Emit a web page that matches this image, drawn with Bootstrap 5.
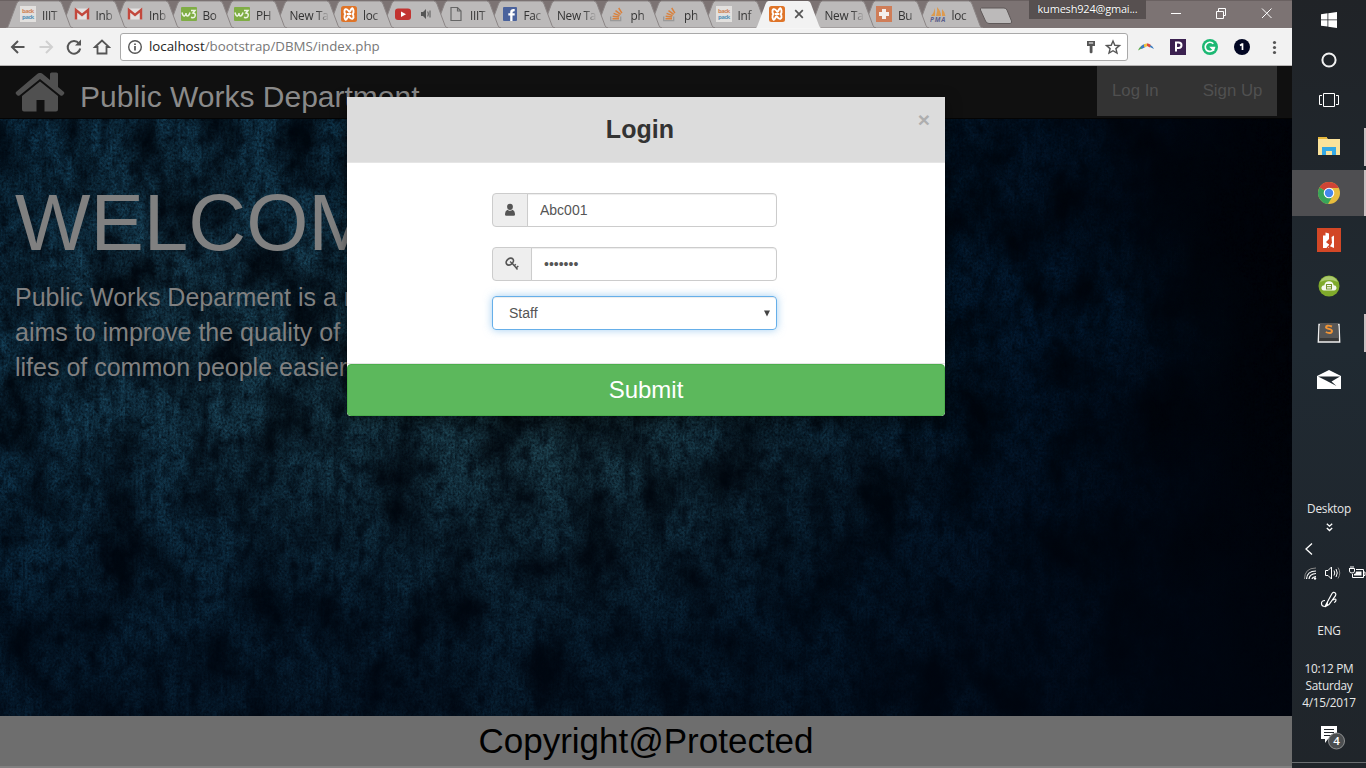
<!DOCTYPE html>
<html lang="en">
<head>
<meta charset="utf-8">
<meta name="viewport" content="width=device-width, initial-scale=1">
<title>Public Works Department</title>
<link href="https://cdn.jsdelivr.net/npm/bootstrap@5.3.0/dist/css/bootstrap.min.css" rel="stylesheet">
<script src="https://cdn.jsdelivr.net/npm/bootstrap@5.3.0/dist/js/bootstrap.bundle.min.js"></script>
<style>
  body { width: 1366px; height: 768px; font-family: "Liberation Sans", Arial, sans-serif; background: #000; }
  svg { display: block; flex: none; }
  .chrome-win { width: 1292px; }
  .ui { font-family: "Open Sans", "Noto Sans", sans-serif; }

  /* tab strip */
  .strip { height: 28px; background: #7c7373; box-shadow: inset 0 1px #6a6161; padding-left: 7px; }
  .tab { width: 66px; height: 28px; margin-right: -12.5px; flex: none; font-size: 11.8px; line-height: 28px; color: #333; letter-spacing: -.3px; padding-left: 13px; position: relative; isolation: isolate; }
  .tab > .shape { position: absolute; left: -1px; top: 0; z-index: -1; }
  .tab .label { width: 20px; margin-left: 6px; white-space: nowrap; padding-top: 1px; -webkit-mask-image: linear-gradient(90deg,#000 50%,rgba(0,0,0,.25) 90%); mask-image: linear-gradient(90deg,#000 50%,rgba(0,0,0,.25) 90%); }
  .tab .label.wide { width: 41px; margin-left: 2px; -webkit-mask-image: linear-gradient(90deg,#000 65%,rgba(0,0,0,.15) 92%); mask-image: linear-gradient(90deg,#000 65%,rgba(0,0,0,.15) 92%); }
  .user-chip { width: 117px; height: 19px; background: #575050; color: #fff; font-size: 11px; line-height: 18px; letter-spacing: -.2px; margin-left: 17px; text-shadow: 0 0 1px #222; }

  /* toolbar */
  .tools { height: 38px; background: #f2f2f2; border-top: 1px solid #f6f6f6; border-bottom: 1px solid #b5b3b3; }
  .address { width: 1008px; height: 28px; background: #fff; border: 1px solid #a9a9a9; border-radius: 3px; font-size: 13.3px; color: #777; margin-left: 9px; padding: 0 3px 0 6px; }
  .address .host { color: #222; }
  .address .path { padding-left: 6px; }

  /* page */
  .site { height: 702px; }
  .topbar { height: 53px; background: #101010; border-bottom: 1px solid #040404; padding: 0 15px; }
  .brand { font-size: 30px; line-height: 30px; color: #8a8a8a; margin: 16px 0 0 15px; }
  .auth { width: 180px; height: 50px; background: #333; font-size: 16.8px; color: #555; gap: 13px; line-height: 49px; padding: 0 15px; }
  .auth a { color: #505050; text-decoration: none; white-space: nowrap; }
  .auth a + a { margin-left: 31px; }
  .hero { height: 597px; position: relative; overflow: hidden; color: #808080; padding: 49px 15px 0;
    background:
      radial-gradient(ellipse 190px 190px at 1292px 150px, rgba(0,1,4,.95), transparent),
      radial-gradient(ellipse 180px 100px at 1110px 190px, rgba(5,48,85,.4), transparent),
      radial-gradient(ellipse 420px 240px at 560px 290px, rgba(44,84,92,.75), transparent),
      radial-gradient(ellipse 330px 330px at 170px 200px, rgba(36,80,98,.7), transparent),
      radial-gradient(ellipse 260px 150px at 330px 600px, rgba(16,60,90,.35), transparent),
      linear-gradient(90deg, #0d3854 0, #10384f 40%, #07263d 62%, #03162a 80%, #010813 91%, #000206 100%); }
  .hero .grain { position: absolute; inset: 0; }
  .hero h1 { font-size: 80px; line-height: 88px; font-weight: 400; margin: 11px 0 0; position: relative; }
  .hero p { font-size: 25px; line-height: 35px; margin: 13px 0 0; position: relative; }
  .foot { height: 52px; background: #6e6e6e; border-bottom: 2px solid #808080; color: #000; font-size: 35px; line-height: 50px; }

  /* login dialog, lies over the page */
  .dialog { position: absolute; left: 347px; top: 31px; width: 598px; height: 319px; background: #fff; border: 0; border-radius: 0 0 4px 4px; box-shadow: 0 5px 15px rgba(0,0,0,.5); z-index: 5; }
  .dialog .modal-header { height: 66px; background: #dcdcdc; border-bottom: 1px solid #e5e5e5; border-radius: 0; padding: 0 12px 2px 0; position: relative; }
  .dialog h4 { font-size: 25px; font-weight: 700; color: #333; line-height: 62px; letter-spacing: .05px; }
  .dismiss { position: absolute; right: 15px; top: 12px; font-size: 21px; line-height: 21px; font-weight: 700; color: #aeaeae; background: none; border: 0; padding: 0; }
  .dialog .modal-body { padding: 30px 168px 0 145px; flex: none; height: 200px; }
  .dialog .input-group { height: 34px; margin-bottom: 20px; }
  .dialog .input-group-text { background: #eee; border-color: #ccc; padding: 0 11px; border-radius: 4px; color: #555; }
  .dialog .input-group-text.key { padding-left: 12px; }
  .dialog .form-control { font-size: 14px; height: 34px; color: #555; border-color: #ccc; border-radius: 4px; padding: 6px 12px; line-height: 20px; box-shadow: inset 0 1px 1px rgba(0,0,0,.075); }
  .dialog .role { border: 1px solid #66afe9; box-shadow: inset 0 1px 1px rgba(0,0,0,.075), 0 0 8px rgba(102,175,233,.6); margin-top: -5px; padding: 0 6px 0 16px; border-radius: 4px; height: 34px; font-size: 14px; color: #555; }
  .dialog .modal-footer { border-top: 1px solid #e5e5e5; padding: 0; height: 53px; }
  .dialog .submit { height: 52px; width: 100%; margin: 0; background: #5cb85c; border: 1px solid #4cae4c; color: #fff; font-size: 24px; line-height: 32px; border-radius: 4px; padding: 0; }

  /* task bar */
  .taskbar { width: 74px; height: 768px; background: linear-gradient(#202327, #202a32 45%, #1f262d 75%, #20252a); color: #e8e8e8; font-size: 11.8px; letter-spacing: -.25px; }
  .cell { height: 40px; display: flex; align-items: center; justify-content: center; }
  .app { height: 47px; border-right: 2px solid transparent; padding-left: 2px; }
  .app.open { background: linear-gradient(#cbc0c2,#cbc0c2) right / 2px 38px no-repeat; border-right: 0; padding-right: 2px; }
  .app.current { height: 46px; background: linear-gradient(90deg,#4e4e51 72px,#cbc0c2 72px); border-right: 0; padding-right: 2px; }
  .clock { line-height: 17px; height: 51px; text-align: center; white-space: nowrap; }
</style>
</head>
<body class="d-flex overflow-hidden m-0">

<svg width="0" height="0" class="position-absolute">
  <defs>
    <symbol id="tab" viewBox="0 0 67 28"><path d="M0 28C1.500 28 2 27 2.500 25.500L10.500 4Q11.500 1 13.500 1H52.500Q55 1 56 4L64 25.500Q65 28 67 28Z" fill="#bcbaba" stroke="#8b8585"/></symbol>
    <symbol id="tab-on" viewBox="0 0 67 28"><path d="M0 28.500C1.500 28 2 27 2.500 25.500L10.500 4Q11.500 1 13.500 1H52.500Q55 1 56 4L64 25.500Q65 28 67 28.500Z" fill="#f2f2f2"/></symbol>
    <symbol id="gmail" viewBox="0 0 16 16"><path d="M1 2.500h14v11H1z" fill="#e3e1e1"/><path d="M2 13.500V4L8 9l6-5v9.500" fill="none" stroke="#c3483d" stroke-width="2.400"/></symbol>
    <symbol id="xampp" viewBox="0 0 16 16"><rect width="16" height="16" rx="2.500" fill="#df7428"/><path d="M3.500 4.500Q4.500 2.500 6 3.500T8 5.500t2-2 2.500 1Q13 6.500 11.500 8 13 9.500 12.500 11.500 11.500 13.500 10 12.500T8 10.500t-2 2-2.500-1Q3 9.500 4.500 8 3 6.500 3.500 4.500zM6 8h4" fill="none" stroke="#fff" stroke-width="1.900"/></symbol>
    <symbol id="stack" viewBox="0 0 16 16"><path d="M1.700 10.500v4.200h10v-4.200" fill="none" stroke="#999" stroke-width="1.300"/><path d="M3.500 12.700h6.500M3.700 10.200l6.400.9M4.600 7.400l6 2.200M6.500 4.600l5.200 3.800M9.700 2l3.200 5.200" stroke="#d8813d" stroke-width="1.500"/></symbol>
    <symbol id="page-i" viewBox="0 0 16 16"><path d="M3 1.500h6.500L13 5v9.500H3zM9.500 1.500V5H13" fill="none" stroke="#666" stroke-width="1.200"/></symbol>
    <symbol id="w3" viewBox="0 0 16 16"><rect y="1" width="16" height="14" rx="1" fill="#7fad45"/><path d="M1 6.500q1 4 2.500 3.500T5 7q0 3 1.500 3T9 6.500M10 4.500h4L12 7q3 .3 2 3.200-1 2.300-4 1" fill="none" stroke="#edf4e5" stroke-width="1.500"/></symbol>
  </defs>
</svg>

<div class="chrome-win d-flex flex-column flex-shrink-0">
  <!-- tab strip -->
  <div class="strip ui d-flex">
    <div class="tab d-flex align-items-center" style="z-index:18"><svg class="shape" width="67" height="28"><use href="#tab"/></svg><svg width="16" height="16"><rect width="16" height="16" fill="#e2e0de"/><text x="2" y="7" font-size="6" font-weight="700" fill="#cf8358" textLength="12">back</text><text x="2" y="13" font-size="6" font-weight="700" fill="#5692b8" textLength="12">pack</text></svg><span class="label">IIIT</span></div>
    <div class="tab d-flex align-items-center" style="z-index:17"><svg class="shape" width="67" height="28"><use href="#tab"/></svg><svg width="16" height="16"><use href="#gmail"/></svg><span class="label">Inb</span></div>
    <div class="tab d-flex align-items-center" style="z-index:16"><svg class="shape" width="67" height="28"><use href="#tab"/></svg><svg width="16" height="16"><use href="#gmail"/></svg><span class="label">Inb</span></div>
    <div class="tab d-flex align-items-center" style="z-index:15"><svg class="shape" width="67" height="28"><use href="#tab"/></svg><svg width="16" height="16"><use href="#w3"/></svg><span class="label">Bo</span></div>
    <div class="tab d-flex align-items-center" style="z-index:14"><svg class="shape" width="67" height="28"><use href="#tab"/></svg><svg width="16" height="16"><use href="#w3"/></svg><span class="label">PH</span></div>
    <div class="tab d-flex align-items-center" style="z-index:13"><svg class="shape" width="67" height="28"><use href="#tab"/></svg><span class="label wide">New Ta</span></div>
    <div class="tab d-flex align-items-center" style="z-index:12"><svg class="shape" width="67" height="28"><use href="#tab"/></svg><svg width="16" height="16"><use href="#xampp"/></svg><span class="label">loc</span></div>
    <div class="tab d-flex align-items-center" style="z-index:11"><svg class="shape" width="67" height="28"><use href="#tab"/></svg><svg width="16" height="16"><rect y="2.500" width="16" height="11.500" rx="3" fill="#c23431"/><path d="M6 5.500l5 2.800-5 2.800z" fill="#fff"/></svg><svg style="margin-left:10px" width="14" height="12" viewBox="0 0 14 12"><path d="M0 4h2l3-3v10L2 8H0z" fill="#555"/><path d="M6.800 3.500q1 2.500 0 5M9 2.500v7" stroke="#555" fill="none"/></svg></div>
    <div class="tab d-flex align-items-center" style="z-index:10"><svg class="shape" width="67" height="28"><use href="#tab"/></svg><svg width="16" height="16"><use href="#page-i"/></svg><span class="label">IIIT</span></div>
    <div class="tab d-flex align-items-center" style="z-index:9"><svg class="shape" width="67" height="28"><use href="#tab"/></svg><svg width="16" height="16"><rect x="1" y="1" width="14" height="14" rx="1" fill="#4a629c"/><path d="M10.500 15V9.500h2.200V7.300h-2.200q-.2-2.300 2.200-2V3.100Q8.200 2.600 8.200 6v1.300H6.300v2.200h1.900V15z" fill="#fff"/></svg><span class="label">Fac</span></div>
    <div class="tab d-flex align-items-center" style="z-index:8"><svg class="shape" width="67" height="28"><use href="#tab"/></svg><span class="label wide">New Ta</span></div>
    <div class="tab d-flex align-items-center" style="z-index:7"><svg class="shape" width="67" height="28"><use href="#tab"/></svg><svg width="16" height="16"><use href="#stack"/></svg><span class="label">ph</span></div>
    <div class="tab d-flex align-items-center" style="z-index:6"><svg class="shape" width="67" height="28"><use href="#tab"/></svg><svg width="16" height="16"><use href="#stack"/></svg><span class="label">ph</span></div>
    <div class="tab d-flex align-items-center" style="z-index:5"><svg class="shape" width="67" height="28"><use href="#tab"/></svg><svg width="16" height="16"><rect width="16" height="16" fill="#e2e0de"/><text x="2" y="7" font-size="6" font-weight="700" fill="#cf8358" textLength="12">back</text><text x="2" y="13" font-size="6" font-weight="700" fill="#5692b8" textLength="12">pack</text></svg><span class="label">Inf</span></div>
    <div class="tab d-flex align-items-center" style="z-index:20"><svg class="shape" width="67" height="28"><use href="#tab-on"/></svg><svg width="16" height="16"><use href="#xampp"/></svg><svg style="margin-left:9px" width="10" height="10" viewBox="0 0 10 10"><path d="M1.200 1.200l7.600 7.600m0-7.600L1.200 8.800" stroke="#555" stroke-width="1.700"/></svg></div>
    <div class="tab d-flex align-items-center" style="z-index:4"><svg class="shape" width="67" height="28"><use href="#tab"/></svg><span class="label wide">New Ta</span></div>
    <div class="tab d-flex align-items-center" style="z-index:3"><svg class="shape" width="67" height="28"><use href="#tab"/></svg><svg width="16" height="16"><rect width="16" height="16" fill="#cf7d58"/><path d="M8 3v10M3 8h10" stroke="#f4efec" stroke-width="4"/></svg><span class="label">Bu</span></div>
    <div class="tab d-flex align-items-center" style="z-index:2"><svg class="shape" width="67" height="28"><use href="#tab"/></svg><svg width="16" height="16"><path d="M1 10q3-3 4-8v8zM6 10q2-5 1-9 4 4 4 9zM12 10V3q3 3 3.500 7z" fill="#dd9a4d"/><text x="0" y="16" font-size="6.500" font-weight="700" font-style="italic" fill="#5c5f8c" textLength="15">PMA</text></svg><span class="label">loc</span></div>
    <svg style="margin:7px 0 0 8px" width="36" height="18" viewBox="0 0 36 18"><path d="M3.500 1H26q2 0 3 2l4.500 11q.8 2.500-1.500 2.500H11q-2.500 0-3.500-2.500L2.500 3Q2 1 3.500 1z" fill="#bcbaba" stroke="#5f5959"/></svg>
    <div class="user-chip text-center" style="margin-left:15px">kumesh924@gmai...</div>
    <svg style="margin-left:24px" width="112" height="27" viewBox="0 0 112 27" fill="none" stroke="#fff"><path d="M1 13.500h10M46.500 11.500h7v7h-7zM48.500 11.500v-3h7v7h-2M92 8.500l9.500 9.500m0-9.500L92 18"/></svg>
  </div>

  <!-- toolbar -->
  <div class="tools ui d-flex align-items-center">
    <svg width="111" height="28" viewBox="0 0 111 28" fill="none" stroke="#555" stroke-width="2"><path d="M24.500 14H12m6-6l-6 6 6 6"/><path stroke="#d0d0d0" d="M39.500 14H52m-6-6l6 6-6 6"/><path d="M79 10.500a6.300 6.300 0 1 0 1.200 5"/><path d="M75 12.500h6v-6z" fill="#555" stroke="none"/><path d="M95 14l7-6.500 7 6.500h-2.500v6.500h-9V14z" stroke-width="1.800"/></svg>
    <div class="address d-flex align-items-center">
      <svg width="16" height="16" viewBox="0 0 16 16" fill="none" stroke="#555" stroke-width="1.400"><circle cx="8" cy="8" r="6.300"/><path d="M8 7v4.500M8 4.500v1.400" stroke-width="1.700"/></svg>
      <span class="path flex-grow-1"><span class="host">localhost</span>/bootstrap/DBMS/index.php</span>
      <svg width="42" height="18" viewBox="0 0 42 18"><path d="M5 3h8v5h-2.500v6.500l-1.500 1-1.300-1V8H5z" fill="#555"/><path d="M6.800 5h4.400" stroke="#fff"/><path d="M31 3l1.800 4.300 4.700.3-3.600 3 1.100 4.500-4-2.400-4 2.400 1.100-4.500-3.600-3 4.700-.3z" fill="none" stroke="#555" stroke-width="1.400"/></svg>
    </div>
    <svg width="163" height="28" viewBox="0 0 163 28" style="margin-left:1px">
      <path d="M9 17.500q1-3 4-5l1.500 2z" fill="#58a846"/><path d="M11.500 14q2-2.500 4-3l1 3-4 2z" fill="#3c7ac0"/><path d="M15 11.500q2-1.500 3.500-1l-.5 3-3 .5z" fill="#f0c43d"/><path d="M18 10.500q2-.5 4 1.500l-1 2.500-3-1.500z" fill="#df4c3d"/><path d="M21.500 12q2.500 1.500 3.500 4l-4-2z" fill="#347ac0"/>
      <rect x="41" y="6" width="16" height="16" fill="#3b2150"/><path d="M47 18.500V9.500h2.500q3 0 3 2.700T49.500 15H47" fill="none" stroke="#fff" stroke-width="2"/>
      <circle cx="81" cy="14" r="8" fill="#1cb873"/><path d="M84.300 10.800a4.600 4.600 0 1 0 1.100 3.700h-3.200l3 3.200" stroke="#fff" stroke-width="1.700" fill="none"/>
      <circle cx="113" cy="14" r="8" fill="#020723"/><path d="M111 12.500l2-1.300h.5V17" stroke="#fff" stroke-width="1.700" fill="none"/>
      <g fill="#555"><circle cx="145.500" cy="9.500" r="1.600"/><circle cx="145.500" cy="14.500" r="1.600"/><circle cx="145.500" cy="19.500" r="1.600"/></g>
    </svg>
  </div>

  <!-- page -->
  <div class="site position-relative d-flex flex-column">
    <nav class="topbar d-flex">
      <svg style="margin-top:6px" width="50" height="41" viewBox="0 0 50 41" fill="#505050"><path d="M25 1q1.500-.3 2.500.7L35 8V2q0-1.500 1.500-1.500h5Q43 .5 43 2v13l6 5q.8 1 0 2l-1.500 1.500q-1 .7-2 0L25 7 4.500 23.500q-1 .7-2 0L1 22q-.8-1 0-2L22.500 1.700Q23.500 .7 25 1z"/><path d="M25 9.500L43 24v13.500q0 2-2 2H29.500V28h-8v11.500H9q-2 0-2-2V24z"/></svg>
      <span class="brand">Public Works Department</span>
      <div class="auth d-flex ms-auto"><a href="#">Log In</a><a href="#">Sign Up</a></div>
    </nav>
    <main class="hero">
      <svg class="grain" width="1292" height="597">
        <filter id="blotch" x="0" y="0" width="100%" height="100%" color-interpolation-filters="sRGB"><feTurbulence type="fractalNoise" baseFrequency=".021 .015" numOctaves="6" seed="21"/><feColorMatrix values="0 0 0 0 0  0 0 0 0 .01  0 0 0 0 .03  2.300 0 0 0 -.85"/></filter>
        <filter id="fine" x="0" y="0" width="100%" height="100%" color-interpolation-filters="sRGB"><feTurbulence type="fractalNoise" baseFrequency=".47 .39" numOctaves="2" seed="3"/><feColorMatrix values="0 0 0 0 0  0 0 0 0 .02  0 0 0 0 .05  1.100 .8 0 0 -.62"/></filter>
        <filter id="mid" x="0" y="0" width="100%" height="100%" color-interpolation-filters="sRGB"><feTurbulence type="fractalNoise" baseFrequency=".09 .07" numOctaves="4" seed="13"/><feColorMatrix values="0 0 0 0 0  0 0 0 0 .02  0 0 0 0 .05  2.200 0 0 0 -.95"/></filter>
        <filter id="streak" x="0" y="0" width="100%" height="100%" color-interpolation-filters="sRGB"><feTurbulence type="fractalNoise" baseFrequency=".12 .012" numOctaves="3" seed="5"/><feColorMatrix values="0 0 0 0 0  0 0 0 0 .02  0 0 0 0 .05  1.800 0 0 0 -.75"/></filter>
        <linearGradient id="low" x2="0" y2="1"><stop offset=".5" stop-color="#000612" stop-opacity="0"/><stop offset="1" stop-color="#000612" stop-opacity=".5"/></linearGradient>
        <rect width="1292" height="597" filter="url(#blotch)" opacity=".85"/>
        <rect width="1292" height="597" filter="url(#mid)" opacity=".7"/>
        <rect width="420" height="597" filter="url(#streak)" opacity=".35"/>
        <rect width="1292" height="597" filter="url(#fine)" opacity=".85"/>
        <rect width="1292" height="597" fill="url(#low)"/>
      </svg>
      <h1>WELCOME</h1>
      <p>Public Works Deparment is a n<br>aims to improve the quality of<br>lifes of common people easier</p>
    </main>
    <footer class="foot text-center">Copyright@Protected</footer>

    <div class="dialog modal-content">
      <div class="modal-header justify-content-center">
        <h4 class="m-0">Login</h4>
        <button class="dismiss" type="button">×</button>
      </div>
      <div class="modal-body">
        <div class="input-group flex-nowrap">
          <span class="input-group-text"><svg width="12" height="14" viewBox="0 0 12 14" fill="#555"><path d="M6 .8c2 0 3 1.400 2.900 3.200S7.700 7 6 7 3.200 5.800 3.100 4 4 .8 6 .8z"/><path d="M1 11q0-2.800 2.300-4.300Q6 8.800 8.700 6.700 11 8.200 11 11v.5q0 1.300-1.300 1.300H2.300Q1 12.800 1 11.500z"/></svg></span>
          <input class="form-control" type="text" value="Abc001">
        </div>
        <div class="input-group flex-nowrap">
          <span class="input-group-text key"><svg width="15" height="14" viewBox="0 0 15 14" fill="none" stroke="#555" stroke-width="1.700"><ellipse cx="4.800" cy="4.600" rx="4" ry="3" transform="rotate(-40 4.800 4.600)"/><path d="M5 4.600q2 1 7.500 7.900M8.800 9.300l2-2M10.800 11.300l2.500-2.300" stroke-width="1.500"/></svg></span>
          <div class="form-control d-flex align-items-center">•••••••</div>
        </div>
        <div class="role d-flex align-items-center justify-content-between"><span>Staff</span><svg width="6" height="7" viewBox="0 0 6 7"><path d="M0 .5h6L3 6.500z" fill="#444"/></svg></div>
      </div>
      <div class="modal-footer"><button class="submit" type="button">Submit</button></div>
    </div>
  </div>
</div>

<!-- task bar -->
<aside class="taskbar ui d-flex flex-column flex-shrink-0">
  <div class="cell"><svg width="16" height="16" viewBox="0 0 16 16" fill="#fff"><path d="M0 2.300l6.500-1v6.200H0zM7.300 1.200L16 0v7.500H7.300zM0 8.300h6.500v6.300l-6.500-.9zM7.300 8.300H16V16l-8.700-1.300z"/></svg></div>
  <div class="cell"><svg width="16" height="16"><circle cx="8" cy="8" r="6.600" fill="none" stroke="#f2f2f2" stroke-width="2"/></svg></div>
  <div class="cell"><svg width="20" height="16" viewBox="0 0 20 16" fill="none" stroke="#fff"><path d="M4.500 1.500h11v13h-11zM3 3.500H.5v9H3M17 3.500h2.500v9H17"/></svg></div>
  <div class="cell app open" style="margin-top:3px"><svg width="22" height="20" viewBox="0 0 22 20"><path d="M0 1h9l1 1h12v16H0z" fill="#fbe39b"/><path d="M0 0h9v2H0z" fill="#e7b83c"/><path d="M4 18v-8h14v8h-4v-4H8v4z" fill="#35a8e4"/></svg></div>
  <div class="cell app current"><svg width="22" height="22" viewBox="0 0 22 22"><circle cx="11" cy="11" r="11" fill="#e8bd3e"/><path d="M11 11L1.500 5.500A11 11 0 0 1 20.700 6H11z" fill="#cf4436"/><path d="M11 11L1.500 5.500A11 11 0 0 0 10 22l5-8.500z" fill="#38a45a"/><circle cx="11" cy="11" r="5.300" fill="#fff"/><circle cx="11" cy="11" r="4.200" fill="#4587ee"/></svg></div>
  <div class="cell app"><svg width="24" height="24" viewBox="0 0 24 24"><path fill="#d24726" d="M0 0h24v24H0z"/><path d="M6 7.500h2.500V4.500l3.500 1V11l-3 3 3 2v4H6zM14.500 9l2.500-1.500V20l-4.500-2 2.500-3z" fill="#fff"/><path d="M13 13l-2.500 1.500 3 2-3.500 3.500" fill="none" stroke="#d24726" stroke-width="1.200"/></svg></div>
  <div class="cell app" style="margin-top:-1px"><svg width="22" height="22" viewBox="0 0 22 22"><circle cx="11" cy="11" r="10.500" fill="#7faa2b"/><path d="M2 7a10 10 0 0 1 18 0q-9-4-18 0z" fill="#abc96f"/><path d="M6 15.500q-3-.5-2.500-3.300.5-2 2.800-2 .7-4 4.700-4t4.700 4q2.500 0 2.800 2.300.2 2.500-2.500 3z" fill="#f4f7ee"/><rect x="8.500" y="9.500" width="5" height="4.500" fill="none" stroke="#76942f"/><path d="M9 11.700h4" stroke="#76942f"/></svg></div>
  <div class="cell app open"><svg width="24" height="22" viewBox="0 0 24 22"><path d="M2 2.500l-.7 17.500h21.400L22 2.500z" fill="#383838" stroke="#eee" stroke-width="1.400"/><path d="M3 1h18l.7 15H2.300z" fill="#565656"/><path d="M15 4.500q-6-2-6 .8c0 2 6 1.200 6 3.700s-3.500 2.500-6.200 1" fill="none" stroke="#f09435" stroke-width="1.900"/></svg></div>
  <div class="cell app"><svg width="24" height="20" viewBox="0 0 24 20"><path d="M0 6L12 0l12 6v13H0z" fill="#fff"/><path d="M1 6.500h22l-8.500 5 5 4.500L9 10.500z" fill="#20282f"/></svg></div>

  <div class="cell" style="height:18px;margin-top:97px">Desktop</div>
  <div class="cell" style="height:18px"><svg width="7" height="9" viewBox="0 0 7 9" fill="none" stroke="#fff" stroke-width="1.300"><path d="M.8.700l2.700 2.500L6.200.700M.8 5l2.700 2.500L6.200 5"/></svg></div>
  <div class="cell justify-content-start" style="height:26px;padding-left:13px"><svg width="8" height="12" viewBox="0 0 8 12" fill="none" stroke="#fff" stroke-width="1.300"><path d="M7 .5L1 6l6 5.500"/></svg></div>
  <div class="cell justify-content-start" style="height:22px;padding-left:11px"><svg width="63" height="16" viewBox="0 0 63 16" fill="none" stroke="#fff"><path d="M1.500 14Q1.500 3 13 3" stroke="#888"/><path d="M3.500 14Q4 6 13 6M6 14q.5-5 7-5.500M9 14q.3-2 4-2.500" stroke-width="1.200"/><circle cx="12" cy="13.500" r="1.200" fill="#fff" stroke="none"/><path d="M22.500 5.500H25L28.500 2v12L25 10.500h-2.500zM31 5.500q1.500 2.500 0 5M33 4q2.500 4 0 8"/><path d="M35 2.500q3.500 5.500 0 11" stroke="#888"/><path d="M53 4.500h7.500v8h-11V9M61 7h1v3.500h-1M46.500 3v3q0 2 2.500 2t2.500-2V3.500h-5M48 1v2m2-2v2"/><path d="M53 6.500h5.500v4H51V9q2 0 2-2.500z" fill="#fff" stroke="none"/></svg></div>
  <div class="cell" style="height:31px"><svg width="18" height="17" viewBox="0 0 18 17" fill="none" stroke="#fff" stroke-width="1.200"><path d="M5 9.500Q1.500 9.500 1.500 12.500T5 15.500M5.500 14.500L12 2.500q1.500-2 3-.8t.5 3L9 13.500l-3.500 2zM7.500 11q0 3-1.500 4M13 9q3-2 3 0t-2 2.500"/></svg></div>
  <div class="cell" style="height:32px">ENG</div>
  <div class="clock" style="margin-top:13px">10:12 PM<br>Saturday<br>4/15/2017</div>
  <div class="cell" style="height:52px;border-bottom:1px solid #6c6f72"><svg width="30" height="26" viewBox="0 0 30 26" style="margin:4px 0 0 13px"><path d="M0 0h16v13H7l-3 4v-4H0z" fill="#fff"/><path d="M3 3.500h10M3 6.500h10M3 9.500h7" stroke="#20252a"/><circle cx="15.500" cy="15" r="8" fill="#4b4e50" stroke="#8e9091"/><text x="12.300" y="19" font-size="11.500" font-weight="600" fill="#fff">4</text></svg></div>
</aside>
</body>
</html>
